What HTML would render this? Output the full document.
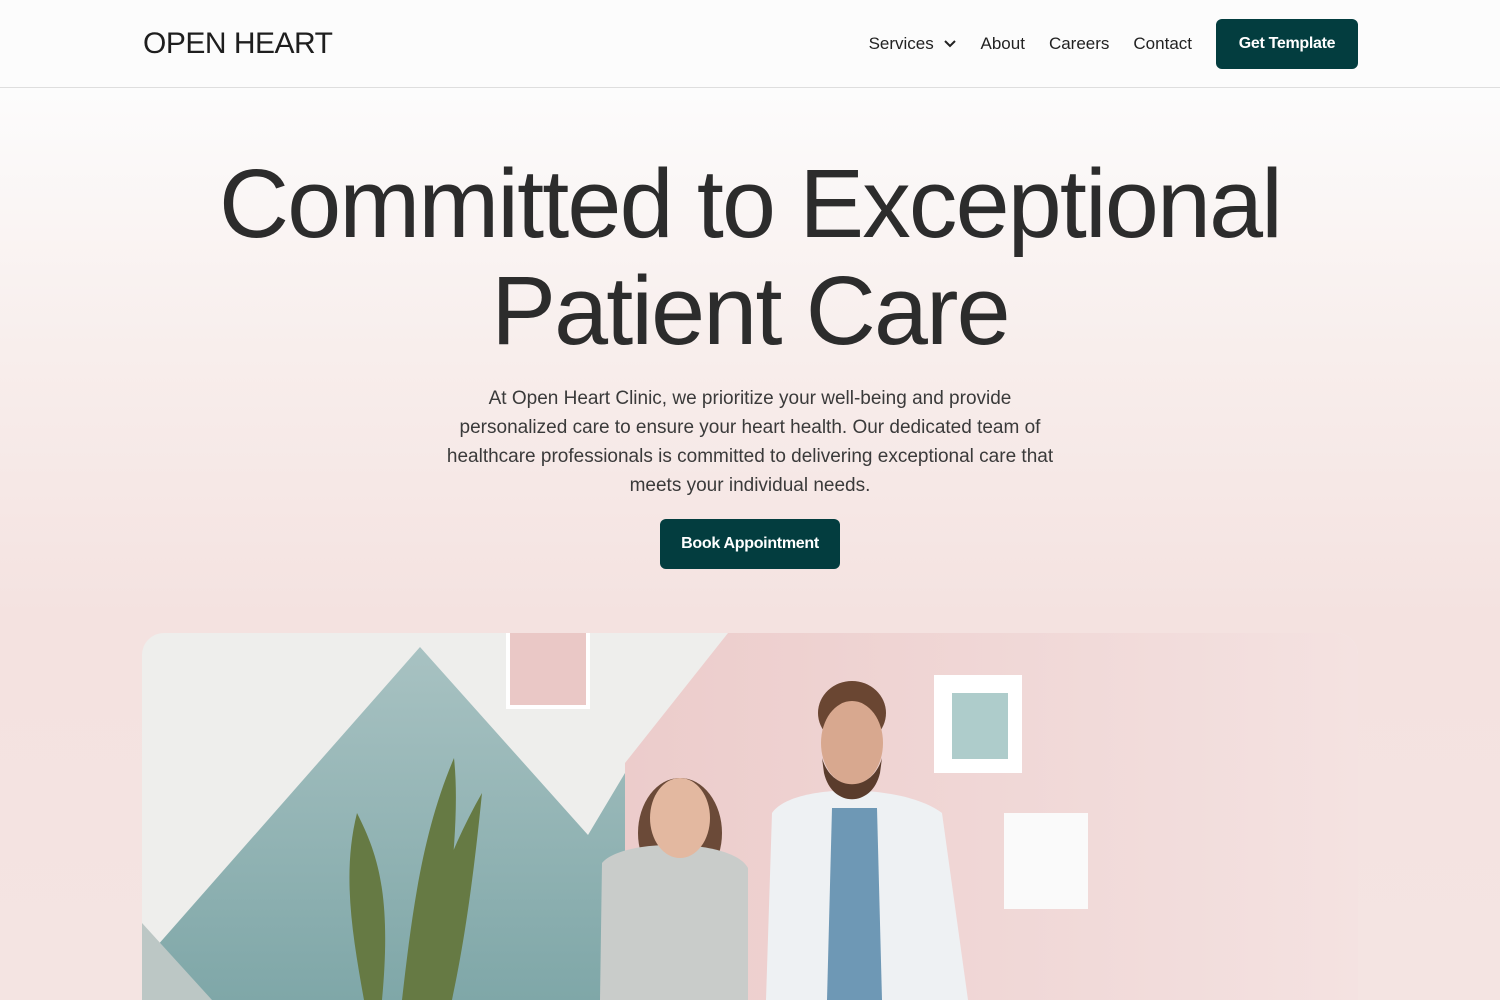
<!DOCTYPE html>
<html><head><meta charset="utf-8"><style>
*{margin:0;padding:0;box-sizing:border-box}
body{width:1500px;height:1000px;overflow:hidden;font-family:"Liberation Sans",sans-serif;color:#2b2b2b;background:linear-gradient(180deg,#fcfcfc 90px,#f8eeec 350px,#f4e2e0 620px,#f4e4e2 1000px)}
header{height:88px;border-bottom:1px solid #dedede;background:#fcfcfc;position:relative}
.logo{position:absolute;left:143px;top:27px;font-size:30px;letter-spacing:-0.5px;color:#1e1e1e}
nav{position:absolute;right:142px;top:19px;display:flex;align-items:center}
nav a{font-size:17px;color:#222;margin-right:24px;text-decoration:none}
.btn{background:#033d3f;color:#fff;border-radius:6px;font-weight:bold;font-size:16px;display:flex;align-items:center;justify-content:center;letter-spacing:-0.3px}
h1{position:absolute;top:150px;left:0;width:1500px;text-align:center;font-weight:normal;font-size:97px;line-height:107px;color:#2c2c2c;letter-spacing:-1.8px}
p{position:absolute;top:384px;left:440px;width:620px;text-align:center;font-size:19px;line-height:29px;color:#3a3a3a}
</style></head><body>
<header><div class="logo">OPEN HEART</div>
<nav><a>Services <svg width="14" height="10" viewBox="0 0 14 10" style="margin-left:4px"><path d="M2 2l5 5 5-5" stroke="#222" stroke-width="2" fill="none"/></svg></a><a>About</a><a>Careers</a><a>Contact</a><div class="btn" style="width:142px;height:50px">Get Template</div></nav></header>
<h1>Committed to Exceptional<br>Patient Care</h1>
<p>At Open Heart Clinic, we prioritize your well-being and provide personalized care to ensure your heart health. Our dedicated team of healthcare professionals is committed to delivering exceptional care that meets your individual needs.</p>
<div class="btn" style="position:absolute;left:660px;top:519px;width:180px;height:50px">Book Appointment</div>
<svg style="position:absolute;left:142px;top:633px" width="1216" height="367" viewBox="0 0 1216 367">
<defs><clipPath id="c"><rect width="1216" height="420" rx="22"/></clipPath>
<linearGradient id="pk" x1="0" x2="1"><stop offset="0" stop-color="#eccccb"/><stop offset="1" stop-color="#f4e2e1"/></linearGradient>
<linearGradient id="tl" x1="0" y1="0" x2="0" y2="1"><stop offset="0" stop-color="#a8c2c2"/><stop offset="1" stop-color="#7fa7a8"/></linearGradient></defs>
<g clip-path="url(#c)">
<rect width="1216" height="367" fill="#eeeeec"/>
<polygon points="586,0 1216,0 1216,367 483,367 483,130" fill="url(#pk)"/>
<polygon points="278,14 446,202 483,140 483,367 0,367 0,330" fill="url(#tl)"/>
<polygon points="0,290 70,367 0,367" fill="#bcc7c5"/>
<rect x="364" y="0" width="84" height="76" fill="#fff"/><rect x="368" y="0" width="76" height="72" fill="#eac8c6"/>
<rect x="792" y="42" width="88" height="98" fill="#fff"/><rect x="810" y="60" width="56" height="66" fill="#aecccb"/>
<rect x="862" y="180" width="84" height="96" fill="#fafafa"/>
<path d="M222 367 C210 300 200 240 215 180 C235 220 250 260 240 367Z M260 367 C270 280 280 200 312 125 C320 200 300 300 300 367Z M270 367 C280 300 300 230 340 160 C330 260 320 320 310 367Z" fill="#667a44"/>
<ellipse cx="538" cy="200" rx="42" ry="55" fill="#6b4a38"/>
<path d="M458 367 L460 230 C480 205 590 205 606 235 L606 367Z" fill="#c9ccca"/>
<ellipse cx="538" cy="185" rx="30" ry="40" fill="#e3b8a0"/>
<ellipse cx="710" cy="80" rx="34" ry="32" fill="#6a4632"/>
<path d="M624 367 L630 180 C650 150 760 150 800 180 L826 367Z" fill="#eef1f3"/>
<path d="M685 367 L690 175 L735 175 L740 367Z" fill="#6e98b5"/>
<ellipse cx="710" cy="110" rx="31" ry="42" fill="#d8a88f"/>
<path d="M680 125 C690 160 730 160 740 125 L738 140 C730 175 690 175 682 140Z" fill="#5a3c2c"/>
</g></svg>
</body></html>
